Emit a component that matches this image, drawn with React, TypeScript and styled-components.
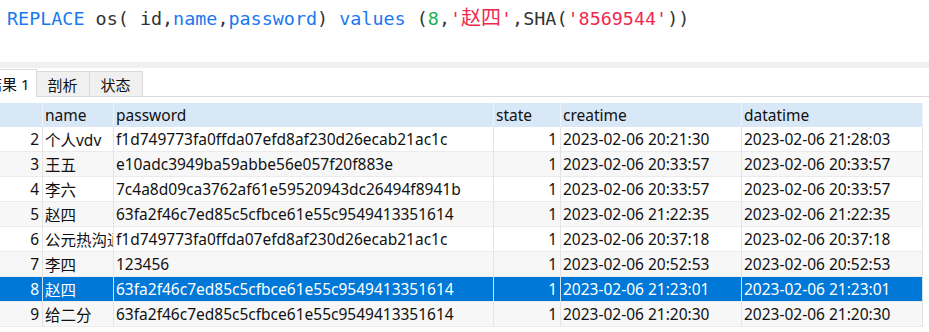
import React from "react";
import styled, { createGlobalStyle } from "styled-components";

const Global = createGlobalStyle`
  html, body { margin: 0; padding: 0; background: #fff; overflow: hidden; }
  body { width: 929px; height: 332px; }
`;

const Page = styled.div`
  width: 929px;
  height: 332px;
  display: flex;
  flex-direction: column;
  background: #fff;
  overflow: hidden;
`;

const Editor = styled.div`
  height: 62px;
  box-sizing: border-box;
  padding: 4px 0 0 7px;
  font-family: "DejaVu Sans Mono", "Noto Sans CJK SC", monospace;
  font-size: 18.4px;
  line-height: 26px;
  color: #333;
  white-space: pre;
`;

const Tok = styled.span<{ $k: "kw" | "num" | "str" | "plain" }>`
  color: ${(p) =>
    p.$k === "kw" ? "#1a78f0" : p.$k === "num" ? "#19b34a" : p.$k === "str" ? "#f0284f" : "#333"};
`;

const Cjk = styled.span`
  font-family: "Noto Sans CJK SC", sans-serif;
  font-size: 20px;
`;

const Band = styled.div`
  height: 6px;
  background: #f0f0f0;
`;

const TabBar = styled.div`
  height: 28px;
  display: flex;
  align-items: flex-end;
  border-bottom: 1px solid #dadada;
  margin-left: -19px;
`;

const Tab = styled.div<{ $active?: boolean }>`
  height: ${(p) => (p.$active ? "28px" : "25px")};
  box-sizing: border-box;
  padding: 0 ${(p) => (p.$active ? "6px" : "11px")};
  display: flex;
  align-items: center;
  font-family: "Noto Sans CJK SC", sans-serif;
  font-size: 15px;
  color: #111;
  background: ${(p) => (p.$active ? "#fff" : "#f0f0f0")};
  border: 1px solid #dadada;
  border-bottom: none;
  margin-bottom: ${(p) => (p.$active ? "-1px" : "0")};
  margin-left: -1px;
  & > span { font-family: "Noto Sans", "Noto Sans CJK SC", sans-serif; }
`;

const Gap = styled.div`
  height: 6px;
`;

const Grid = styled.div`
  display: grid;
  grid-template-columns: 43px 71px 380px 67px 181px 181px;
  grid-auto-rows: 25px;
  grid-template-rows: 24px;
  font-family: "Noto Sans", "Noto Sans CJK SC", sans-serif;
  font-size: 15.5px;
  color: #111;
`;

const Cell = styled.div<{ $right?: boolean; $head?: boolean; $sel?: boolean; $alt?: boolean }>`
  box-sizing: border-box;
  border-right: 1px solid ${(p) => (p.$head ? "#eef4fb" : p.$sel ? "#cfe3f7" : "#e4e4e4")};
  border-bottom: 1px solid ${(p) => (p.$head ? "#dbe7f4" : "#ebebeb")};
  background: ${(p) => (p.$head ? "#d9e8f6" : p.$sel ? "#0078d7" : p.$alt ? "#f7f7f7" : "#fff")};
  color: ${(p) => (p.$sel ? "#fff" : "#111")};
  padding: 0 ${(p) => (p.$right ? "3px" : "2px")};
  display: flex;
  align-items: center;
  justify-content: ${(p) => (p.$right ? "flex-end" : "flex-start")};
  white-space: nowrap;
  overflow: hidden;
`;

const rows = [
  ["2", "个人vdv", "f1d749773fa0ffda07efd8af230d26ecab21ac1c", "1", "2023-02-06 20:21:30", "2023-02-06 21:28:03"],
  ["3", "王五", "e10adc3949ba59abbe56e057f20f883e", "1", "2023-02-06 20:33:57", "2023-02-06 20:33:57"],
  ["4", "李六", "7c4a8d09ca3762af61e59520943dc26494f8941b", "1", "2023-02-06 20:33:57", "2023-02-06 20:33:57"],
  ["5", "赵四", "63fa2f46c7ed85c5cfbce61e55c9549413351614", "1", "2023-02-06 21:22:35", "2023-02-06 21:22:35"],
  ["6", "公元热沟通", "f1d749773fa0ffda07efd8af230d26ecab21ac1c", "1", "2023-02-06 20:37:18", "2023-02-06 20:37:18"],
  ["7", "李四", "123456", "1", "2023-02-06 20:52:53", "2023-02-06 20:52:53"],
  ["8", "赵四", "63fa2f46c7ed85c5cfbce61e55c9549413351614", "1", "2023-02-06 21:23:01", "2023-02-06 21:23:01"],
  ["9", "给二分", "63fa2f46c7ed85c5cfbce61e55c9549413351614", "1", "2023-02-06 21:20:30", "2023-02-06 21:20:30"],
];

const headers = ["", "name", "password", "state", "creatime", "datatime"];
const rightCols = [0, 3];

export default function App() {
  return (
    <Page>
      <Global />
      <Editor>
        <Tok $k="kw">REPLACE</Tok>
        <Tok $k="plain"> os( id,</Tok>
        <Tok $k="kw">name</Tok>
        <Tok $k="plain">,</Tok>
        <Tok $k="kw">password</Tok>
        <Tok $k="plain">) </Tok>
        <Tok $k="kw">values</Tok>
        <Tok $k="plain"> (</Tok>
        <Tok $k="num">8</Tok>
        <Tok $k="plain">,</Tok>
        <Tok $k="str">
          '<Cjk>赵四</Cjk>'
        </Tok>
        <Tok $k="plain">,SHA(</Tok>
        <Tok $k="str">'8569544'</Tok>
        <Tok $k="plain">))</Tok>
      </Editor>
      <Band />
      <TabBar>
        <Tab $active>
          结果<span>&nbsp;1</span>
        </Tab>
        <Tab>剖析</Tab>
        <Tab>状态</Tab>
      </TabBar>
      <Gap />
      <Grid>
        {headers.map((h, i) => (
          <Cell key={"h" + i} $head>
            {h}
          </Cell>
        ))}
        {rows.map((r, ri) =>
          r.map((v, ci) => (
            <Cell
              key={ri + "-" + ci}
              $right={rightCols.includes(ci)}
              $sel={ri === 6}
              $alt={ri % 2 === 1}
            >
              {v}
            </Cell>
          ))
        )}
      </Grid>
    </Page>
  );
}
